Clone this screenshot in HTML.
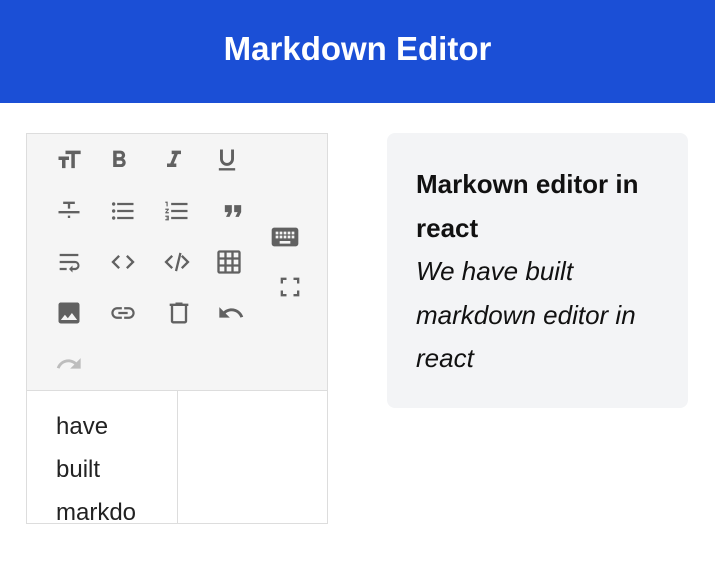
<!DOCTYPE html>
<html><head><meta charset="utf-8"><style>
*{margin:0;padding:0;box-sizing:border-box}
body{width:715px;height:573px;background:#fff;font-family:"Liberation Sans",Roboto,sans-serif;position:relative;overflow:hidden}
.hdr{position:absolute;left:0;top:0;width:715px;height:103px;background:#1b4fd6;color:#fff;font-weight:bold;font-size:33px;text-align:center;line-height:98px}
.ed{position:absolute;left:26px;top:133px;width:302px;height:391px;border:1px solid #ddd;background:#f5f5f5}
.ta{position:absolute;left:0;top:256px;width:300px;height:133px;background:#fff;border-top:1px solid #ddd}
.ta .split{position:absolute;left:150px;top:0;width:1px;height:133px;background:#ddd}
.ta .t{position:absolute;left:29px;top:14px;font-size:24px;line-height:43px;color:#222}
svg.i{position:absolute;width:28px;height:28px;fill:#616161}
.card{position:absolute;left:387px;top:133px;width:301px;height:275px;background:#f3f4f6;border-radius:8px;padding:30px 0 0 29px;font-size:26px;line-height:43.5px;color:#111}
.card b{display:block}
.card i{display:block}
</style></head><body>
<div class="hdr">Markdown Editor</div>
<div class="ed">
<svg class="i" style="left:28px;top:12px" viewBox="0 0 24 24"><path d="M9 4v3h5v12h3V7h5V4H9zm-6 8h3v7h3v-7h3V9H3v3z"/></svg>
<svg class="i" style="left:78px;top:12px" viewBox="0 0 24 24"><path d="M15.6 10.79c.97-.67 1.65-1.770 1.65-2.79 0-2.26-1.75-4-4-4H7v14h7.04c2.09 0 3.71-1.7 3.71-3.79 0-1.52-.86-2.82-2.15-3.42zM10 6.5h3c.83 0 1.5.67 1.5 1.5s-.67 1.5-1.5 1.5h-3v-3zm3.5 9H10v-3h3.5c.83 0 1.5.67 1.5 1.5s-.67 1.5-1.5 1.5z"/></svg>
<svg class="i" style="left:133px;top:12px" viewBox="0 0 24 24"><path d="M10 4v3h2.21l-3.42 8H6v3h8v-3h-2.21l3.42-8H18V4z"/></svg>
<svg class="i" style="left:186px;top:12px" viewBox="0 0 24 24"><path d="M12 17c3.31 0 6-2.69 6-6V3h-2.5v8c0 1.93-1.57 3.5-3.5 3.5S8.5 12.930 8.5 11V3H6v8c0 3.31 2.69 6 6 6zm-7 2v2h14v-2H5z"/></svg>
<svg class="i" style="left:28px;top:63px" viewBox="0 0 24 24"><path d="M7 4v2h4v4h2V6h4V4H7zM3 12v2h18v-2H3zm8 4v2h2v-2h-2z"/></svg>
<svg class="i" style="left:82px;top:63px" viewBox="0 0 24 24"><path d="M4 10.5c-.83 0-1.5.67-1.5 1.5s.67 1.5 1.5 1.5 1.5-.67 1.5-1.5-.67-1.5-1.5-1.5zm0-6c-.83 0-1.5.67-1.5 1.5S3.17 7.5 4 7.5 5.5 6.83 5.5 6 4.83 4.5 4 4.5zm0 12c-.83 0-1.5.68-1.5 1.5s.68 1.5 1.5 1.5 1.5-.68 1.5-1.5-.67-1.5-1.5-1.5zM7 19h14v-2H7v2zm0-6h14v-2H7v2zm0-8v2h14V5H7z"/></svg>
<svg class="i" style="left:136px;top:63px" viewBox="0 0 24 24"><path d="M2 17h2v.5H3v1h1v.5H2v1h3v-4H2v1zm1-9h1V4H2v1h1v3zm-1 3h1.8L2 13.1v.9h3v-1H3.2L5 10.9V10H2v1zm5-6v2h14V5H7zm0 14h14v-2H7v2zm0-6h14v-2H7v2z"/></svg>
<svg class="i" style="left:192px;top:63px" viewBox="0 0 24 24"><path d="M6 17h3l2-4V7H5v6h3zm8 0h3l2-4V7h-6v6h3z"/></svg>
<svg class="i" style="left:28px;top:114px" viewBox="0 0 24 24"><path d="M4 19h6v-2H4v2zM20 5H4v2h16V5zm-3 6H4v2h13.25c1.1 0 2 .9 2 2s-.9 2-2 2H15v-2l-3 3 3 3v-2h2c2.21 0 4-1.79 4-4s-1.79-4-4-4z"/></svg>
<svg class="i" style="left:82px;top:114px" viewBox="0 0 24 24"><path d="M9.4 16.6L4.8 12l4.6-4.6L8 6l-6 6 6 6 1.4-1.4zm5.2 0l4.6-4.6-4.6-4.6L16 6l6 6-6 6-1.4-1.4z"/></svg>
<svg class="i" style="left:136px;top:114px" viewBox="0 0 24 24"><path d="M8.6 16.6L4 12l4.6-4.6L7.2 6l-6 6 6 6zm6.8 0L20 12l-4.6-4.6L16.8 6l6 6-6 6zM10.2 19.5l1.9.5 3.8-15.5-1.9-.5z"/></svg>
<svg class="i" style="left:188px;top:114px" viewBox="0 0 24 24"><path d="M20 2H4c-1.1 0-2 .9-2 2v16c0 1.1.9 2 2 2h16c1.1 0 2-.9 2-2V4c0-1.1-.9-2-2-2zM8 20H4v-4h4v4zm0-6H4v-4h4v4zm0-6H4V4h4v4zm6 12h-4v-4h4v4zm0-6h-4v-4h4v4zm0-6h-4V4h4v4zm6 12h-4v-4h4v4zm0-6h-4v-4h4v4zm0-6h-4V4h4v4z"/></svg>
<svg class="i" style="left:28px;top:165px" viewBox="0 0 24 24"><path d="M21 19V5c0-1.1-.9-2-2-2H5c-1.1 0-2 .9-2 2v14c0 1.1.9 2 2 2h14c1.1 0 2-.9 2-2zM8.5 13.5l2.5 3.01L14.5 12l4.5 6H5l3.5-4.5z"/></svg>
<svg class="i" style="left:82px;top:165px" viewBox="0 0 24 24"><path d="M3.9 12c0-1.71 1.39-3.1 3.1-3.1h4V7H7c-2.76 0-5 2.24-5 5s2.24 5 5 5h4v-1.9H7c-1.71 0-3.1-1.39-3.1-3.1zM8 13h8v-2H8v2zm9-6h-4v1.9h4c1.71 0 3.1 1.39 3.1 3.1s-1.39 3.1-3.1 3.1h-4V17h4c2.76 0 5-2.24 5-5s-2.24-5-5-5z"/></svg>
<svg class="i" style="left:138px;top:165px" viewBox="0 0 24 24"><path d="M15 4V3H9v1H4v2h1v13c0 1.1.9 2 2 2h10c1.1 0 2-.9 2-2V6h1V4h-5zm2 15H7V6h10v13z"/></svg>
<svg class="i" style="left:190px;top:165px" viewBox="0 0 24 24"><path d="M12.5 8c-2.65 0-5.05.99-6.9 2.6L2 7v9h9l-3.62-3.62c1.39-1.16 3.16-1.88 5.12-1.880 3.54 0 6.55 2.31 7.6 5.5l2.37-.78C21.08 11.03 17.15 8 12.5 8z"/></svg>
<svg class="i" style="left:28px;top:216px;fill:#bdbdbd" viewBox="0 0 24 24"><path d="M18.4 10.6C16.55 8.99 14.15 8 11.5 8c-4.65 0-8.58 3.03-9.96 7.22L3.9 16c1.05-3.19 4.05-5.5 7.6-5.5 1.95 0 3.73.72 5.12 1.88L13 16h9V7l-3.6 3.6z"/></svg>
<svg class="i" style="left:242px;top:87px;width:32px;height:32px" viewBox="0 0 24 24"><path d="M20 5H4c-1.1 0-1.99.9-1.99 2L2 17c0 1.1.9 2 2 2h16c1.1 0 2-.9 2-2V7c0-1.1-.9-2-2-2zm-9 3h2v2h-2V8zm0 3h2v2h-2v-2zM8 8h2v2H8V8zm0 3h2v2H8v-2zm-1 2H5v-2h2v2zm0-3H5V8h2v2zm9 7H8v-2h8v2zm0-4h-2v-2h2v2zm0-3h-2V8h2v2zm3 3h-2v-2h2v2zm0-3h-2V8h2v2z"/></svg>
<svg class="i" style="left:249px;top:139px;width:28px;height:28px" viewBox="0 0 24 24"><path d="M4 4h5v2H6v3H4V4zm11 0h5v5h-2V6h-3V4zM4 15h2v3h3v2H4v-5zm14 0h2v5h-5v-2h3v-3z"/></svg>
<div class="ta"><div class="split"></div><div class="t">have<br>built<br>markdo</div></div>
</div>
<div class="card"><b>Markown editor in react</b><i>We have built markdown editor in react</i></div>
</body></html>
